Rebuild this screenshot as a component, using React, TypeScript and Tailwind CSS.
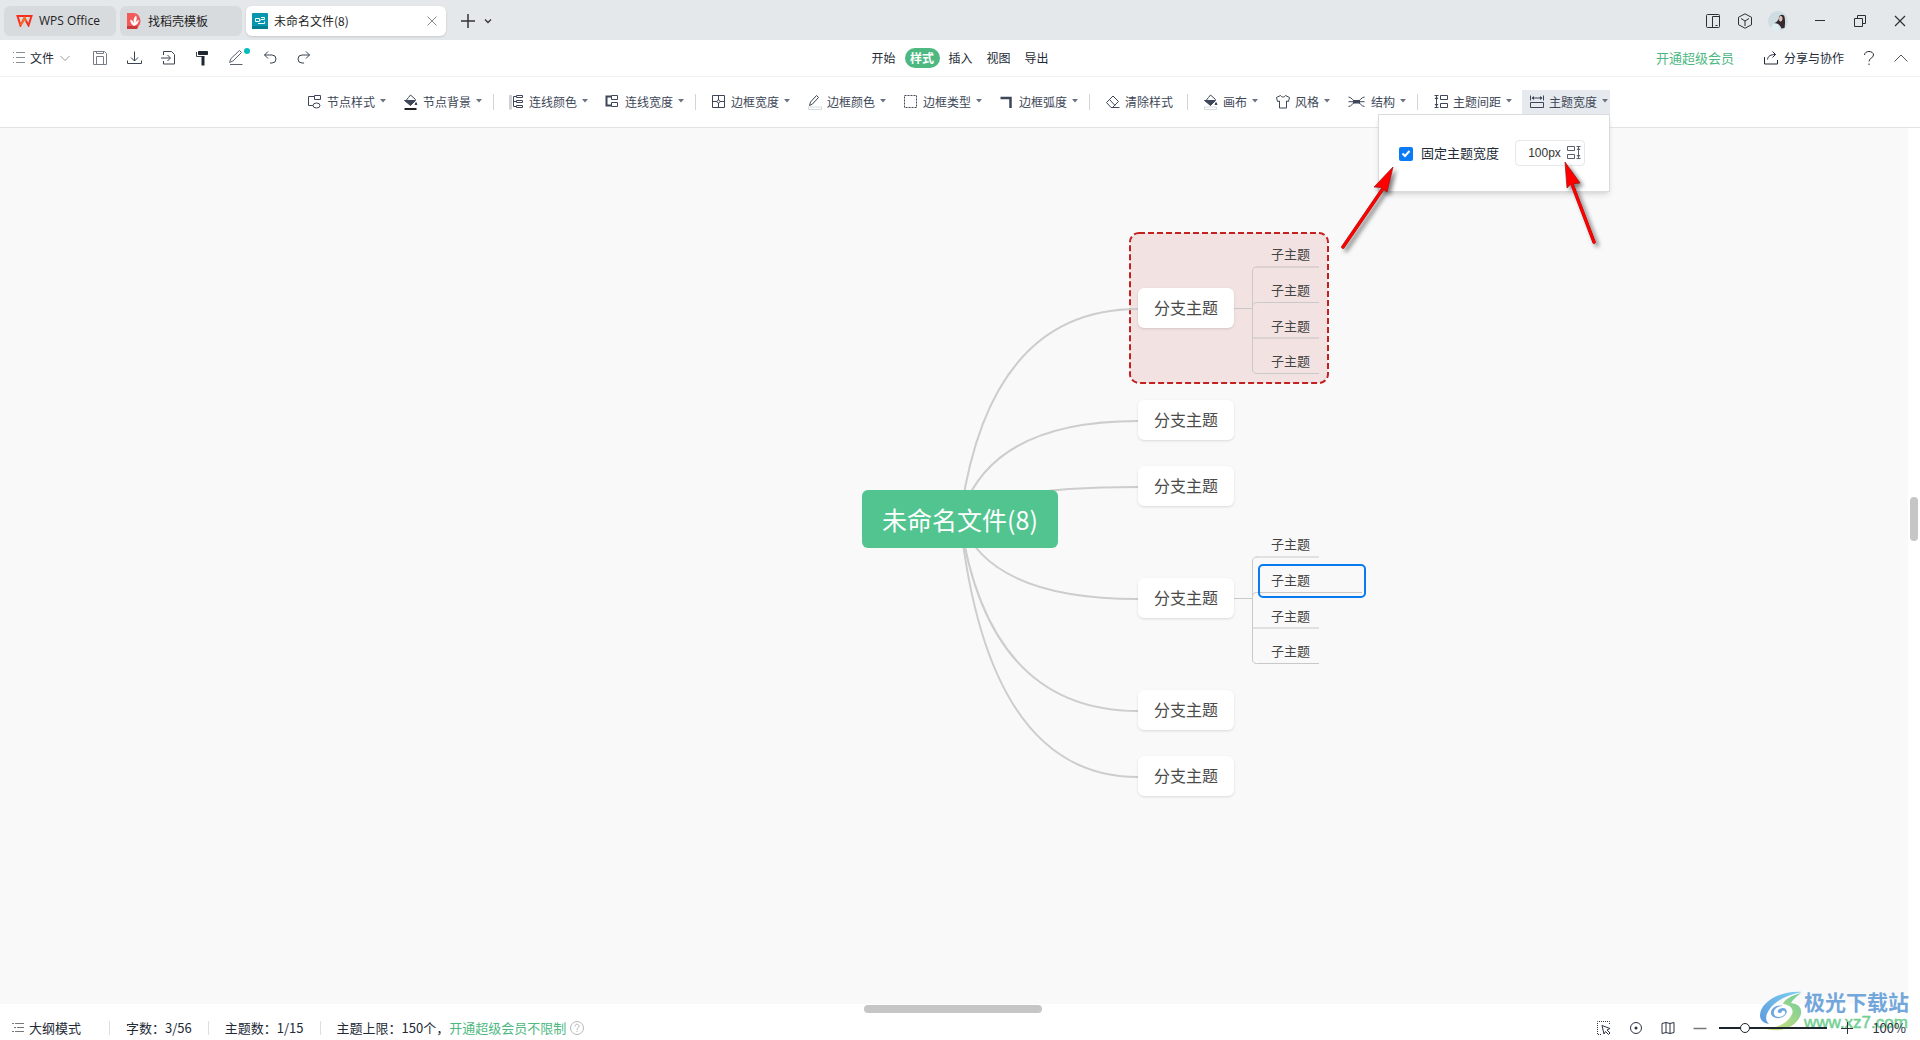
import React from "react";

type IconProps = { children: React.ReactNode; className?: string; box?: string };

function Icon({ children, className = "size-4", box = "0 0 16 16" }: IconProps) {
  return (
    <svg viewBox={box} className={`shrink-0 ${className}`} fill="none" stroke="currentColor" strokeWidth="1" aria-hidden="true">
      {children}
    </svg>
  );
}

function Caret() {
  return (
    <svg viewBox="0 0 6 4" className="mb-0.5 ml-px h-1 w-1.5 shrink-0" aria-hidden="true">
      <path d="M0 0h6L3 3.5z" fill="#6b7280" />
    </svg>
  );
}

function Divider() {
  return <span className="ml-px h-4 w-px shrink-0 bg-[#d3d5d8]" />;
}

type ToolProps = { label: string; icon: React.ReactNode; caret?: boolean; active?: boolean };

function Tool({ label, icon, caret = true, active = false }: ToolProps) {
  return (
    <button
      type="button"
      className={`flex h-6 shrink-0 items-center gap-1 pl-[7px] text-xs whitespace-nowrap text-[#3d4757] ${
        active ? "bg-[#e6eaee]" : ""
      } ${caret ? "pr-0.5" : "pr-[5px]"}`}
    >
      {icon}
      <span>{label}</span>
      {caret && <Caret />}
    </button>
  );
}

const nodeStyleIcon = (
  <Icon>
    <path d="M7.500 1.500h6v4h-6zM7 2.500H1.500v9H6" />
    <ellipse cx="9.500" cy="11.500" rx="3.500" ry="2.500" />
  </Icon>
);

const bucketPath = (
  <>
    <path d="M5.500 3.500 7.500 1l5 4.500-5 5L3 6.500z" />
    <path d="M1.500 6.500h11l-5 5z" fill="currentColor" />
    <path d="M13 8.500l1 2h-2z" fill="currentColor" />
  </>
);

const nodeFillIcon = (
  <Icon>
    {bucketPath}
    <path d="M1.500 15h12" strokeWidth="2" stroke="#222" />
  </Icon>
);

const lineColorIcon = (
  <Icon>
    <path d="M1.500 1v14.500" stroke="#cfd1d4" strokeWidth="3" />
    <path d="M7.500 1.500h6v2h-6zM7.500 6.500h6v2h-6zM7.500 11.500h6v2h-6zM7 2.500H4.500v10H7M4.500 7.500H7" />
  </Icon>
);

const lineWidthIcon = (
  <Icon>
    <path d="M6.500 1.500h6v4h-6zM6.500 8.500h6v4h-6z" />
    <path d="M6 2.500H1.500v9H6" strokeWidth="2" />
  </Icon>
);

const borderWidthIcon = (
  <Icon>
    <path d="M1.500 1.500h12v12h-12zM7.500 2v4M7.500 9v4M2 7.500h4M9 7.500h4" />
    <circle cx="7.500" cy="7.500" r="1.500" />
  </Icon>
);

const borderColorIcon = (
  <Icon>
    <path d="M2.500 11.500l1-3.500L9.500 1.500l2 2L5.500 10z" />
    <path d="M1.500 13h13v2.500h-13z" stroke="#d5dadf" />
  </Icon>
);

const borderTypeIcon = (
  <Icon>
    <rect x="1.500" y="1.500" width="12" height="12" strokeDasharray="2 1" />
  </Icon>
);

const borderArcIcon = (
  <Icon>
    <path d="M1.500 4h10v10" strokeWidth="2.500" />
  </Icon>
);

const eraserIcon = (
  <Icon>
    <path d="M1.500 8.500 8 2l5.500 5.500-6 6H6zM4.500 5.500l5.500 6M6.500 13.500h8" />
  </Icon>
);

const canvasIcon = (
  <Icon>
    {bucketPath}
    <path d="M1.500 13h12v2.500h-12z" stroke="#d5dadf" fill="#fff" />
  </Icon>
);

const shirtIcon = (
  <Icon>
    <path d="M5.500 1.500 1.500 3.500l1 4 2-.5v7h7V7l2 .5 1-4-4-2c-1 2-4 2-5 0z" />
  </Icon>
);

const structureIcon = (
  <Icon className="h-4 w-5" box="0 0 20 16">
    <path d="M1.500 3C5 3 5.500 7.500 9.500 7.500S14 3 17.500 3M1.500 12.500C5 12.500 5.500 8 9.500 8s4.500 4.500 8 4.500M1.500 7.700h16" />
    <rect x="6" y="6" width="7" height="3.500" fill="currentColor" stroke="none" />
  </Icon>
);

const gapPaths = (
  <>
    <path d="M7.500 1.500h7v4h-7zM7.500 9.500h7v4h-7zM1.500 1.500h4M1.500 13.500h4M3.500 2v11" />
    <path d="M3.500 2.500 5.500 5h-4zM3.500 12.500l2-2.500h-4z" fill="currentColor" stroke="none" />
  </>
);

const spacingIcon = <Icon>{gapPaths}</Icon>;

const widthIcon = (
  <Icon>
    <path d="M1.500 8.500h13v5h-13zM1.500 1.500v5M14.500 1.500v5M3 4h10" />
    <path d="M2.500 4l2.500-2v4zM13.500 4l-2.500-2v4z" fill="currentColor" stroke="none" />
  </Icon>
);

function Arrow({ head, shaft }: { head: string; shaft: string }) {
  return (
    <g>
      <path d={shaft} stroke="#a01010" strokeWidth="3.500" strokeLinecap="round" />
      <path d={head} fill="#ff0000" stroke="#a01010" strokeWidth="0.700" />
      <path d={shaft} stroke="#ff0000" strokeWidth="2.800" strokeLinecap="round" />
    </g>
  );
}

function WidthPopup() {
  return (
    <div className="absolute top-full right-0 z-20 h-[78px] w-[232px] border border-[#d9dbde] bg-white shadow-md">
      <div className="flex items-center pt-[25px] pl-5">
        <label className="flex items-center text-[13px] whitespace-nowrap text-[#232a36]">
          <span className="relative mt-0.5 mr-2 size-3.5">
            <input type="checkbox" defaultChecked className="block size-3.5 appearance-none rounded-xs bg-[#0a7af5]" />
            <svg viewBox="0 0 14 14" className="pointer-events-none absolute inset-0" fill="none" aria-hidden="true">
              <path d="M3.500 6.500 6 9l4.500-5" stroke="#fff" strokeWidth="2" />
            </svg>
          </span>
          固定主题宽度
        </label>
        <div className="ml-4 flex h-[26px] w-[70px] items-center rounded border border-[#e6e8ec] text-[#5a5f68]">
          <input
            type="text"
            aria-label="主题宽度"
            defaultValue="100px"
            className="w-12 pl-3 font-['Liberation_Sans',sans-serif] text-xs text-[#333] outline-none"
          />
          <Icon className="ml-0.5 size-4 -scale-x-100">{gapPaths}</Icon>
        </div>
      </div>
      <svg
        viewBox="0 0 231 150"
        className="pointer-events-none absolute -top-px left-0 h-[150px] w-[231px] overflow-visible drop-shadow-[3px_3px_2px_rgba(0,0,0,0.5)]"
        fill="none"
        aria-hidden="true"
      >
        <Arrow head="M14 53 -5 73 1.500 73.500 8 78z" shaft="M3 76 -36 133" />
        <Arrow head="M186 48 188 74 192 70 201 69z" shaft="M193 70 215 128" />
      </svg>
    </div>
  );
}

function TitleBar() {
  return (
    <header className="flex h-10 shrink-0 items-center bg-[#e4e8eb] px-1 pt-0.5 text-xs text-[#222]">
      <button type="button" className="flex h-[30px] w-28 items-center gap-1.5 rounded-md bg-[#d8dbde] pl-3">
        <svg viewBox="0 0 17 12" className="h-3 w-[17px]" fill="none" strokeWidth="2" aria-hidden="true">
          <path d="M1.500 1h14l-3 9.500L8.500 3l-4 7.500z" stroke="#f5301e" />
          <path d="M4.500 10.500 8.500 3l1.500 3" stroke="#fb6a20" />
        </svg>
        <span className="font-['Open_Sans',sans-serif]">WPS Office</span>
      </button>
      <button type="button" className="ml-1 flex h-[30px] w-[122px] items-center gap-1.5 rounded-md bg-[#d8dbde] pl-1.5">
        <svg viewBox="0 0 16 16" className="size-4" aria-hidden="true">
          <path d="M1 0h7a7 8 0 0 1 4 14l-1 2H1z" fill="#f25a5a" />
          <path d="M1 13h11l-1 3H1z" fill="#c93a3a" />
          <path d="M8 13C5 11 4 9 4.500 6.500 6.500 7.500 7.500 9 8 10.500 7 7 8 4 10 2.500c1.500 3 .5 5-1 7.500 1-1.500 2-2.500 4-3-.5 3-2 5-5 6z" fill="#fff" />
        </svg>
        找稻壳模板
      </button>
      <div className="ml-1 flex h-[30px] w-[200px] items-center rounded-md bg-white pr-2 pl-1.5 shadow">
        <svg viewBox="0 0 16 16" className="size-4" fill="none" aria-hidden="true">
          <rect width="16" height="16" rx="1" fill="#0897ad" />
          <path d="M0 13h16v3H0z" fill="#067d90" />
          <path d="M3.500 5.500h4v3h-4zM9 4.500h3.500v2H9M7.500 7H9M9 10.500h3.500v-2M6 10.500h3" stroke="#fff" />
        </svg>
        <span className="ml-1.5 flex-1">未命名文件(8)</span>
        <button type="button" aria-label="关闭标签">
          <Icon className="size-3 text-[#888]" box="0 0 12 12">
            <path d="M1.500 1.500l9 9M10.500 1.500l-9 9" />
          </Icon>
        </button>
      </div>
      <button type="button" aria-label="新建" className="ml-[15px]">
        <Icon className="size-3.5 text-[#333]" box="0 0 14 14">
          <path d="M7 0v14M0 7h14" strokeWidth="1.500" />
        </Icon>
      </button>
      <button type="button" aria-label="标签列表" className="ml-[9px]">
        <Icon className="size-2 text-[#333]" box="0 0 8 8">
          <path d="M1 2.500 4 5.500l3-3" strokeWidth="1.300" />
        </Icon>
      </button>
      <div className="ml-auto flex items-center pr-2.5 text-[#2c2f33]">
        <button type="button" aria-label="侧栏">
          <Icon className="size-4">
            <rect x="1.500" y="1.500" width="13" height="13" rx="1" />
            <path d="M7.500 14.500V3.500h7M10.500 12.500h2" />
          </Icon>
        </button>
        <button type="button" aria-label="应用" className="ml-4">
          <Icon className="size-4">
            <path d="M8 .8l6.500 3.500v7.500L8 15.200l-6.500-3.500V4.300zM4 5.500 8 8l4-2.500M8 8v5" />
          </Icon>
        </button>
        <button type="button" aria-label="账户" className="ml-[15px]">
          <svg viewBox="0 0 20 20" className="size-5" aria-hidden="true">
            <circle cx="10" cy="10" r="10" fill="#cddde2" />
            <path d="M3 17c2-5 4-6 7-6l2 8.500c-4 1-7 0-9-2.500z" fill="#dfeef2" />
            <path d="M11 6c1-3 5-3 5.500 0 1 4 .5 8 0 11l-3 .5C12 13.500 9 11.500 6 12.500c3-2 5-3 5-6.500z" fill="#33292f" />
            <path d="M11.500 5.500c2-1 3 0 3 2s-1 3-2 3-2-1-1-5z" fill="#e4c4b8" />
          </svg>
        </button>
        <button type="button" aria-label="最小化" className="ml-[26px]">
          <Icon className="size-3" box="0 0 12 12">
            <path d="M1 5.500h10" />
          </Icon>
        </button>
        <button type="button" aria-label="还原" className="ml-7">
          <Icon className="size-3" box="0 0 12 12">
            <path d="M.5 3.500h8v8h-8zM3.500 3V.5h8v8H9" />
          </Icon>
        </button>
        <button type="button" aria-label="关闭" className="ml-7">
          <Icon className="size-3" box="0 0 12 12">
            <path d="M1 1l10 10M11 1 1 11" strokeWidth="1.200" />
          </Icon>
        </button>
      </div>
    </header>
  );
}

function QuickButton({ label, children }: { label: string; children: React.ReactNode }) {
  return (
    <button type="button" aria-label={label} className="text-[#3a4350]">
      <Icon>{children}</Icon>
    </button>
  );
}

const menuTabs = ["开始", "样式", "插入", "视图", "导出"];

function MenuBar() {
  return (
    <nav className="grid h-[37px] shrink-0 grid-cols-[1fr_auto_1fr] items-center border-b border-[#f0f1f2] text-xs text-[#232a36]">
      <div className="flex items-center pl-3">
        <button type="button" className="mr-[22px] flex items-center">
          <Icon className="h-3 w-3.5 text-[#8a8f96]" box="0 0 14 12">
            <path d="M1 .5h1M4 .5h9M1 5.500h1M4 5.500h9M1 10.500h1M4 10.500h9" />
          </Icon>
          <span className="mr-1.5 ml-1">文件</span>
          <Icon className="h-2 w-2.5 text-[#999]" box="0 0 10 8">
            <path d="M.5 2 5 6.500 9.500 2" />
          </Icon>
        </button>
        <div className="flex items-center gap-[18px]">
          <QuickButton label="保存">
            <path d="M1.500 1.500h11l2 2v11h-13zM4.500 14.500v-8h7v8M4.500 1.500v2h7v-2" stroke="#777d86" />
          </QuickButton>
          <QuickButton label="下载">
            <path d="M8.500 1.500V11M5 7.500 8.500 11 12 7.500M1.500 10.500v3h14v-3" />
          </QuickButton>
          <QuickButton label="导入">
            <path d="M3.500 5V1.500h8l3 3v9.500h-11V11M1 8h9M7.500 5l3 3-3 3" />
          </QuickButton>
          <QuickButton label="格式刷">
            <path d="M4.500 1.500h9v3h-9z" fill="#1f2732" stroke="#1f2732" />
            <path d="M2.500 2v4.500h6" />
            <path d="M9 6v9.500" strokeWidth="3" stroke="#1f2732" />
          </QuickButton>
          <button type="button" aria-label="画笔" className="relative text-[#5c636d]">
            <Icon>
              <path d="M1.500 12.500l1.500-4 8.500-8 2 2-8.500 8.500zM2 14.500h12.500" />
            </Icon>
            <span className="absolute -top-0.5 -right-1.5 size-1.5 rounded-full bg-[#05bcbc]" />
          </button>
          <QuickButton label="撤销">
            <path d="M6 1.500 2.500 5 6 8.500M2.500 5H10a4 4 0 0 1 0 8H8" />
          </QuickButton>
          <QuickButton label="重做">
            <path d="M10 1.500 13.500 5 10 8.500M13.500 5H6a4 4 0 0 0 0 8h2" />
          </QuickButton>
        </div>
      </div>
      <div className="flex items-center gap-1">
        {menuTabs.map((t) => (
          <button
            key={t}
            type="button"
            className={
              t === "样式" ? "h-5 w-[35px] rounded-full bg-[#4db87f] font-bold text-white" : "h-5 w-[34px]"
            }
          >
            {t}
          </button>
        ))}
      </div>
      <div className="flex items-center justify-end pr-3">
        <a href="#vip" className="text-[13px] text-[#4db87f]">
          开通超级会员
        </a>
        <button type="button" className="ml-[29px] flex items-center gap-[5px]">
          <Icon>
            <path d="M1.500 7v7h13v-4M4.500 9.500c.5-3.500 3-5 8-5M9.500 1.500l3 3-3 3" />
          </Icon>
          分享与协作
        </button>
        <button type="button" aria-label="帮助" className="ml-[18px]">
          <Icon className="h-4 w-3.5" box="0 0 14 16">
            <path d="M2.500 5C2.500 2.500 5 1.500 7 1.500s4.500 1 4.500 3.500c0 3-4.500 3-4.500 6.500M7 13.500V15" />
          </Icon>
        </button>
        <button type="button" aria-label="收起功能区" className="ml-[18px]">
          <Icon className="h-2 w-3.5 text-[#555]" box="0 0 14 8">
            <path d="M.5 7.500 7 1l6.500 6.500" />
          </Icon>
        </button>
      </div>
    </nav>
  );
}

function Toolbar() {
  return (
    <div className="flex h-[51px] shrink-0 items-center justify-center gap-2 border-b border-[#e2e3e5] pr-2.5">
      <Tool label="节点样式" icon={nodeStyleIcon} />
      <Tool label="节点背景" icon={nodeFillIcon} />
      <Divider />
      <Tool label="连线颜色" icon={lineColorIcon} />
      <Tool label="连线宽度" icon={lineWidthIcon} />
      <Divider />
      <Tool label="边框宽度" icon={borderWidthIcon} />
      <Tool label="边框颜色" icon={borderColorIcon} />
      <Tool label="边框类型" icon={borderTypeIcon} />
      <Tool label="边框弧度" icon={borderArcIcon} />
      <Divider />
      <Tool label="清除样式" icon={eraserIcon} caret={false} />
      <Divider />
      <Tool label="画布" icon={canvasIcon} />
      <Tool label="风格" icon={shirtIcon} />
      <Tool label="结构" icon={structureIcon} />
      <Divider />
      <Tool label="主题间距" icon={spacingIcon} />
      <div className="relative">
        <Tool label="主题宽度" icon={widthIcon} active />
        <WidthPopup />
      </div>
    </div>
  );
}

const branchTops = [55, 167, 233, 345, 457, 523];
const groupTops = [0, 290];
const topicCenters = [21, 57, 93, 128];

function MindMap() {
  return (
    <div className="absolute top-[calc(50%-333px)] left-[calc(50%-92px)] h-[563px] w-[504px]">
      <svg viewBox="0 0 504 563" className="absolute inset-0 size-full overflow-visible" fill="none" aria-hidden="true">
        <rect x="268" y="0" width="198" height="150" rx="9" fill="#f3e2e2" stroke="#c52020" strokeWidth="2" strokeDasharray="6 3" />
        {branchTops.map((y) => (
          <path key={y} d={`M98 286Q126 ${y + 21} 276 ${y + 21}`} stroke="#cdcdcd" strokeWidth="2" />
        ))}
        {groupTops.map((y) => (
          <g key={y} transform={`translate(0 ${y})`}>
            <path d="M372 75.500h18.500M390.500 136V39q0-5 4-5" stroke="#c9c9c9" />
            <path d="M394 34h63M391 105h66" stroke="#b4b4b4" strokeOpacity="0.350" strokeWidth="2" />
            <path d={`M390.500 74q0-4.500 4-4.500H${y ? 500 : 457}M390.500 136q0 4.500 4 4.500H457`} stroke="#c9c9c9" />
          </g>
        ))}
        <rect x="397" y="332" width="106" height="32" rx="4" stroke="#0a7af0" strokeWidth="2" />
      </svg>
      <div className="absolute top-[257px] left-0 flex h-[58px] w-[196px] items-center justify-center rounded-md bg-[#52c48f] pt-0.5 text-[25px] whitespace-nowrap text-white">
        未命名文件(8)
      </div>
      {branchTops.map((y) => (
        <div
          key={y}
          style={{ top: y }}
          className="absolute left-[276px] flex h-10 w-24 items-center justify-center rounded-md bg-white pb-0.5 text-base text-[#4a4a4a] shadow"
        >
          分支主题
        </div>
      ))}
      {groupTops.map((g) =>
        topicCenters.map((c) => (
          <div key={g + c} style={{ top: g + c - 10 }} className="absolute left-[409px] text-[13px] leading-5 text-[#444]">
            子主题
          </div>
        )),
      )}
    </div>
  );
}

function Watermark() {
  return (
    <div className="pointer-events-none absolute right-[11px] bottom-[7px] flex items-center gap-0.5">
      <svg viewBox="0 0 42 40" className="h-10 w-[42px]" aria-hidden="true">
        <defs>
          <linearGradient id="swirl-top" x1="0" y1="1" x2="1" y2="0">
            <stop offset="0" stopColor="#5f98dc" />
            <stop offset="1" stopColor="#7cd0f2" />
          </linearGradient>
          <linearGradient id="swirl-bottom" x1="0" y1="1" x2="1" y2="0">
            <stop offset="0" stopColor="#d9e27a" />
            <stop offset="1" stopColor="#6ccb9a" />
          </linearGradient>
        </defs>
        <path d="M42 1C24-1 1 9 0 24c0 5 3 8 9 9-5-5-3-11 3-18C19 8 30 3 42 1z" fill="url(#swirl-top)" />
        <path d="M41 2C30 5 24 9 23 13c8 1 12 6 8 12-4 7-13 12-25 13 15 4 31-2 35-15 1-7-3-10-10-11 2-4 6-7 10-10z" fill="url(#swirl-bottom)" />
        <path d="M23 15c-6 0-10 4-9 8s8 4 11 0c1-3-1-4-3-3 0 2-3 3-4 1s2-4 5-4 5 3 3 6c-3 5-13 6-15 0-1-5 5-10 12-8z" fill="#6fa8e0" />
      </svg>
      <div className="whitespace-nowrap">
        <div className="text-[21px] leading-6 font-bold text-[#73a7db]">极光下载站</div>
        <div className="font-['Liberation_Sans',sans-serif] text-[17px] leading-5 font-normal text-[#74cf93] [-webkit-text-stroke:0.5px_#74cf93]">
          www.xz7.com
        </div>
      </div>
    </div>
  );
}

function StatusDivider() {
  return <span className="mx-4 h-3.5 w-px bg-[#dcdee0]" />;
}

function StatusBar() {
  return (
    <footer className="relative shrink-0">
      <div className="flex h-3 justify-center pt-px pr-3.5">
        <div className="h-2 w-[178px] rounded-full bg-[#c6c6c6]" />
      </div>
      <Watermark />
      <div className="relative flex h-6 items-center pr-3.5 pl-3 text-[13px] whitespace-nowrap text-[#232a36]">
        <button type="button" className="flex items-center gap-[5px]">
          <Icon className="size-3 text-[#777]" box="0 0 12 12">
            <path d="M0 1.500h2M3 1.500h9M2 5.500h2M5 5.500h7M0 9.500h2M3 9.500h9" />
          </Icon>
          <span>大纲模式</span>
        </button>
        <span className="ml-7 h-3.5 w-px bg-[#dcdee0]" />
        <span className="ml-4">字数：3/56</span>
        <StatusDivider />
        <span>主题数：1/15</span>
        <StatusDivider />
        <span>主题上限：150个，</span>
        <a href="#vip" className="text-[#4db87f]">
          开通超级会员不限制
        </a>
        <button type="button" aria-label="上限说明" className="ml-1 text-[#b5b8bc]">
          <Icon className="size-3.5" box="0 0 14 14">
            <circle cx="7" cy="7" r="6.500" />
            <path d="M5 5.500c0-3 4-3 4-.5C9 7 7 6.500 7 9M7 10v1" />
          </Icon>
        </button>
        <div className="ml-auto flex items-center text-[#2c3340]">
          <button type="button" aria-label="框选">
            <Icon className="size-3.5" box="0 0 14 14">
              <path d="M4 13.500H.5V.5h12V4" strokeDasharray="1 1" />
              <path d="M5 4.500l8 3-3 1.500 3 3-1.500 1.500-3-3L7 13z" />
            </Icon>
          </button>
          <button type="button" aria-label="定位中心" className="ml-[18px]">
            <Icon className="size-3.5" box="0 0 14 14">
              <circle cx="7" cy="7" r="5.500" />
              <circle cx="7" cy="7" r="1.500" fill="currentColor" stroke="none" />
            </Icon>
          </button>
          <button type="button" aria-label="导航图" className="ml-[18px]">
            <Icon className="size-3.5" box="0 0 14 14">
              <path d="M1 2.500l4-1 4 1 4-1v10l-4 1-4-1-4 1zM5 1.500v10M9 2.500v10" />
            </Icon>
          </button>
          <button type="button" aria-label="缩小" className="ml-[18px]">
            <Icon className="size-3.5" box="0 0 14 14">
              <path d="M.5 7.500h13" strokeWidth="1.500" stroke="#777" />
            </Icon>
          </button>
          <input
            type="range"
            aria-label="缩放"
            min="0"
            max="100"
            defaultValue="21"
            className="ml-3 h-0.5 w-[108px] appearance-none bg-[#1c242c] [&::-webkit-slider-thumb]:size-2.5 [&::-webkit-slider-thumb]:appearance-none [&::-webkit-slider-thumb]:rounded-full [&::-webkit-slider-thumb]:border [&::-webkit-slider-thumb]:border-[#1c242c] [&::-webkit-slider-thumb]:bg-white"
          />
          <button type="button" aria-label="放大" className="ml-3.5">
            <Icon className="size-3" box="0 0 12 12">
              <path d="M0 6.500h12M6.500 0v12" />
            </Icon>
          </button>
          <span className="ml-[19px]">100%</span>
        </div>
      </div>
    </footer>
  );
}

export default function App() {
  return (
    <div className="flex h-screen flex-col bg-white font-['Noto_Sans_CJK_SC',sans-serif]">
      <TitleBar />
      <MenuBar />
      <Toolbar />
      <main className="flex min-h-0 flex-1">
        <div className="relative flex-1 overflow-hidden bg-[#f9f9f9]">
          <MindMap />
        </div>
        <div className="flex w-3 flex-col items-center">
          <div className="grow-[369]" />
          <div className="h-11 w-2 rounded-full bg-[#c6c6c6]" />
          <div className="grow-[464]" />
        </div>
      </main>
      <StatusBar />
    </div>
  );
}
